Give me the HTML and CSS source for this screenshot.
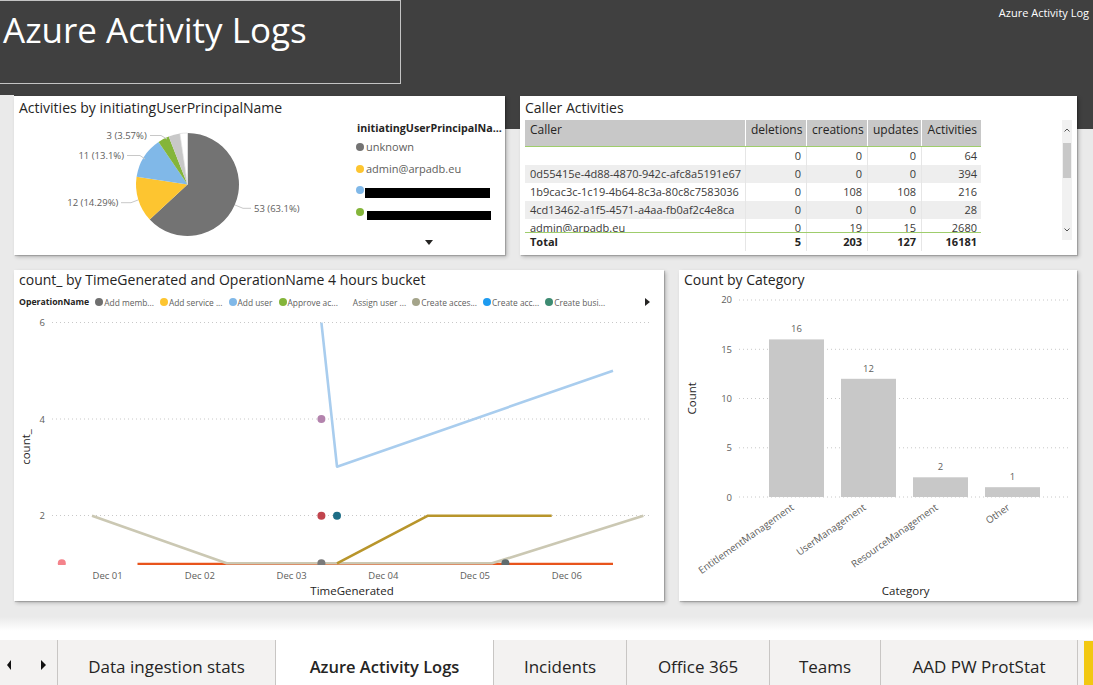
FILE: index.html
```html
<!DOCTYPE html>
<html lang="en">
<head>
<meta charset="utf-8">
<title>Azure Activity Logs</title>
<link rel="stylesheet" href="styles.css">
</head>
<body>
<header class="topbar">
  <div class="title-box"><h1 class="page-title">Azure Activity Logs</h1></div>
  <div class="top-right">Azure Activity Log</div>
</header>

<main class="canvas">
  <div class="row row-top">
    <section class="card card-pie">
      <div class="card-title">Activities by initiatingUserPrincipalName</div>
      <div class="pie-body">
        <svg class="pie-svg" width="342" height="130" viewBox="0 0 342 130">
          <path d="M173.5 64.5 L173.5 13 A51.5 51.5 0 1 1 135.73 99.52Z" fill="#737373"/>
          <path d="M173.5 64.5 L135.73 99.52 A51.5 51.5 0 0 1 122.58 56.8Z" fill="#fdc530"/>
          <path d="M173.5 64.5 L122.58 56.8 A51.5 51.5 0 0 1 144.55 21.9Z" fill="#80b8e8"/>
          <path d="M173.5 64.5 L144.55 21.9 A51.5 51.5 0 0 1 154.71 16.55Z" fill="#84b53a"/>
          <path d="M173.5 64.5 L154.71 16.55 A51.5 51.5 0 0 1 165.89 13.57Z" fill="#c8c8c8"/>
          <path d="M173.5 64.5 L165.89 13.57 A51.5 51.5 0 0 1 173.5 13Z" fill="#ffffff" stroke="#dcdcdc" stroke-width="0.7"/>
          <g class="leader">
            <polyline points="221,85 229,88.3 237,88.3"/>
            <polyline points="107,82.7 117,82.7 124,80"/>
            <polyline points="113,35.5 126,35.5 131,39"/>
            <polyline points="136,15.5 147,15.5 153,19"/>
          </g>
          <g class="pie-lbl">
            <text x="240" y="92.3">53 (63.1%)</text>
            <text x="104.3" y="86" text-anchor="end">12 (14.29%)</text>
            <text x="110" y="39" text-anchor="end">11 (13.1%)</text>
            <text x="132.7" y="19" text-anchor="end">3 (3.57%)</text>
          </g>
        </svg>
        <div class="pie-legend">
          <div class="pl-title">initiatingUserPrincipalNa...</div>
          <div class="pl-item"><span class="dot dot-gray"></span><span>unknown</span></div>
          <div class="pl-item"><span class="dot dot-yellow"></span><span>admin@arpadb.eu</span></div>
          <div class="pl-item"><span class="dot dot-blue"></span><span class="redact r3"></span></div>
          <div class="pl-item"><span class="dot dot-green"></span><span class="redact r4"></span></div>
          <div class="pl-more"><span class="tri-down"></span></div>
        </div>
      </div>
    </section>

    <section class="card card-table">
      <div class="card-title">Caller Activities</div>
      <div class="table-wrap">
        <div class="tbl">
          <div class="tr th">
            <div class="c c1">Caller</div><div class="c n">deletions</div><div class="c n">creations</div><div class="c n">updates</div><div class="c n last">Activities</div>
          </div>
          <div class="tbody">
            <div class="tr"><div class="c c1"></div><div class="c n">0</div><div class="c n">0</div><div class="c n">0</div><div class="c n last">64</div></div>
            <div class="tr alt"><div class="c c1">0d55415e-4d88-4870-942c-afc8a5191e67</div><div class="c n">0</div><div class="c n">0</div><div class="c n">0</div><div class="c n last">394</div></div>
            <div class="tr"><div class="c c1">1b9cac3c-1c19-4b64-8c3a-80c8c7583036</div><div class="c n">0</div><div class="c n">108</div><div class="c n">108</div><div class="c n last">216</div></div>
            <div class="tr alt"><div class="c c1">4cd13462-a1f5-4571-a4aa-fb0af2c4e8ca</div><div class="c n">0</div><div class="c n">0</div><div class="c n">0</div><div class="c n last">28</div></div>
            <div class="tr"><div class="c c1">admin@arpadb.eu</div><div class="c n">0</div><div class="c n">19</div><div class="c n">15</div><div class="c n last">2680</div></div>
          </div>
          <div class="tr total">
            <div class="c c1">Total</div><div class="c n">5</div><div class="c n">203</div><div class="c n">127</div><div class="c n last">16181</div>
          </div>
        </div>
        <div class="vscroll">
          <svg class="chev" width="10" height="8" viewBox="0 0 10 8"><path d="M2.5 5.5 L5 3 L7.5 5.5" fill="none" stroke="#555" stroke-width="1"/></svg>
          <div class="thumb"></div>
          <div class="sc-fill"></div>
          <svg class="chev" width="10" height="8" viewBox="0 0 10 8"><path d="M2.5 2.5 L5 5 L7.5 2.5" fill="none" stroke="#555" stroke-width="1"/></svg>
        </div>
      </div>
    </section>
  </div>

  <div class="row row-bottom">
    <section class="card card-line">
      <div class="card-title tight">count_ by TimeGenerated and OperationName 4 hours bucket</div>
      <div class="line-legend">
        <span class="ll-name">OperationName</span>
        <span class="ll-item"><span class="dot sm" style="background:#6f6f6f"></span>Add memb...</span>
        <span class="ll-item"><span class="dot sm" style="background:#fdc530"></span>Add service ...</span>
        <span class="ll-item"><span class="dot sm" style="background:#80b8e8"></span>Add user</span>
        <span class="ll-item"><span class="dot sm" style="background:#84b53a"></span>Approve ac...</span>
        <span class="ll-item"><span class="dot sm" style="background:#ffffff"></span>Assign user ...</span>
        <span class="ll-item"><span class="dot sm" style="background:#a4a48a"></span>Create acces...</span>
        <span class="ll-item"><span class="dot sm" style="background:#1e9bf0"></span>Create acc...</span>
        <span class="ll-item"><span class="dot sm" style="background:#3d8b72"></span>Create busi...</span>
        <span class="tri-right-sm"></span>
      </div>
      <svg class="line-svg" width="650" height="291" viewBox="0 0 650 291">
        <defs><clipPath id="plotclip"><rect x="30" y="0" width="620" height="255"/></clipPath></defs>
        <g class="grid">
          <line x1="38" y1="12.5" x2="636" y2="12.5"/>
          <line x1="38" y1="109" x2="636" y2="109"/>
          <line x1="38" y1="205.5" x2="636" y2="205.5"/>
        </g>
        <g class="ax">
          <text x="31" y="16" text-anchor="end">6</text>
          <text x="31" y="112.5" text-anchor="end">4</text>
          <text x="31" y="209" text-anchor="end">2</text>
          <text x="93.6" y="268.5" text-anchor="middle">Dec 01</text>
          <text x="185.8" y="268.5" text-anchor="middle">Dec 02</text>
          <text x="277.6" y="268.5" text-anchor="middle">Dec 03</text>
          <text x="369.3" y="268.5" text-anchor="middle">Dec 04</text>
          <text x="461" y="268.5" text-anchor="middle">Dec 05</text>
          <text x="552.8" y="268.5" text-anchor="middle">Dec 06</text>
        </g>
        <text class="axt" x="338" y="285" text-anchor="middle">TimeGenerated</text>
        <text class="axt" transform="translate(16,137) rotate(-90)" text-anchor="middle">count_</text>
        <g clip-path="url(#plotclip)" fill="none" stroke-width="2.6" stroke-linejoin="round">
          <polyline points="123.5,253.8 599,253.8" stroke="#e8541c" stroke-width="2.2"/>
          <polyline points="78,205.7 212.7,253.3 478,253.3 629.4,205.7" stroke="#cbc8b3"/>
          <polyline points="323,253.3 414,205.7 537.7,205.7" stroke="#b8952b"/>
          <polyline points="307.4,12.7 323,156.7 599,60.7" stroke="#a9cdee"/>
          <g stroke="none">
            <circle cx="47.8" cy="253.3" r="4" fill="#f4838b"/>
            <circle cx="307.4" cy="253.3" r="4" fill="#7a7a7a"/>
            <circle cx="491.4" cy="253.3" r="4" fill="#5f6b6d"/>
            <circle cx="307.4" cy="109" r="4" fill="#b383ad"/>
            <circle cx="307.4" cy="205.7" r="4" fill="#c1444d"/>
            <circle cx="323" cy="205.7" r="4" fill="#1d6d86"/>
          </g>
        </g>
      </svg>
    </section>

    <section class="card card-bar">
      <div class="card-title tight">Count by Category</div>
      <svg class="bar-svg" width="398" height="309" viewBox="0 0 398 309">
        <g class="grid">
          <line x1="60" y1="8" x2="390" y2="8"/>
          <line x1="60" y1="57.3" x2="390" y2="57.3"/>
          <line x1="60" y1="106.5" x2="390" y2="106.5"/>
          <line x1="60" y1="155.8" x2="390" y2="155.8"/>
          <line x1="60" y1="205" x2="390" y2="205"/>
        </g>
        <g class="ax">
          <text x="53" y="11" text-anchor="end">20</text>
          <text x="53" y="60.5" text-anchor="end">15</text>
          <text x="53" y="109.7" text-anchor="end">10</text>
          <text x="53" y="159" text-anchor="end">5</text>
          <text x="53" y="208.5" text-anchor="end">0</text>
        </g>
        <g fill="#c8c8c8">
          <rect x="90" y="47.4" width="55" height="157.6"/>
          <rect x="162" y="86.8" width="55" height="118.2"/>
          <rect x="234" y="185.3" width="55" height="19.7"/>
          <rect x="306" y="195.2" width="55" height="9.8"/>
        </g>
        <g class="ax val">
          <text x="117.5" y="39.8" text-anchor="middle">16</text>
          <text x="189.5" y="80.2" text-anchor="middle">12</text>
          <text x="261.5" y="178.2" text-anchor="middle">2</text>
          <text x="333.5" y="188.2" text-anchor="middle">1</text>
        </g>
        <g class="ax rot">
          <text transform="translate(115.5,217) rotate(-35)" text-anchor="end">EntitlementManagement</text>
          <text transform="translate(187.5,217) rotate(-35)" text-anchor="end">UserManagement</text>
          <text transform="translate(259.5,217) rotate(-35)" text-anchor="end">ResourceManagement</text>
          <text transform="translate(331.5,217) rotate(-35)" text-anchor="end">Other</text>
        </g>
        <text class="axt" x="226.7" y="303" text-anchor="middle">Category</text>
        <text class="axt" transform="translate(16.5,106.3) rotate(-90)" text-anchor="middle">Count</text>
      </svg>
    </section>
  </div>
</main>

<nav class="tabs">
  <div class="tab-arrows"><span class="tri-left"></span><span class="tri-right"></span></div>
  <div class="tab w1">Data ingestion stats</div>
  <div class="tab w2 active">Azure Activity Logs</div>
  <div class="tab w3">Incidents</div>
  <div class="tab w4">Office 365</div>
  <div class="tab w5">Teams</div>
  <div class="tab w6">AAD PW ProtStat</div>
  <div class="tab-gap"></div>
  <div class="tab-accent"></div>
</nav>
</body>
</html>
```

FILE: styles.css
```css
* { box-sizing: border-box; margin: 0; padding: 0; }
html, body { width: 1093px; height: 685px; overflow: hidden; }
body {
  font-family: "Open Sans", "Noto Sans", sans-serif;
  color: #252423;
  background: #ffffff;
}

/* ---------- header ---------- */
.topbar {
  height: 95px;
  background: #404040;
  display: flex;
  justify-content: space-between;
  align-items: flex-start;
}
.title-box {
  width: 401px;
  height: 84px;
  border: 1px solid #c4c4c4;
  border-left: none;
}
.page-title {
  font-weight: 400;
  font-size: 35px;
  line-height: 48px;
  padding: 5px 0 0 3px;
  color: #ffffff;
  white-space: nowrap;
}
.top-right {
  font-size: 11px;
  line-height: 14px;
  color: #ffffff;
  margin: 6px 4px 0 0;
}

/* ---------- canvas ---------- */
.canvas {
  height: 545px;
  padding: 1px 16px 0 14px;
  background:
    linear-gradient(#404040, #404040) 14px 0 / 1079px 34px no-repeat,
    linear-gradient(#eaeaea 522px, #ffffff 536px);
}
.row { display: flex; gap: 15px; }
.row-top { height: 159px; }
.row-bottom { height: 331px; margin-top: 15px; }

.card {
  background: #ffffff;
  box-shadow: 1px 1px 1px rgba(0,0,0,0.18), 2px 2px 4px rgba(0,0,0,0.22);
  overflow: hidden;
}
.card-pie { width: 491px; }
.card-table { width: 557px; }
.card-line { width: 650px; }
.card-bar { width: 398px; }

.card-title {
  height: 24px;
  padding: 2px 5px 0;
  font-size: 14px;
  line-height: 20px;
  color: #252423;
  white-space: nowrap;
}
.card-title.tight { padding-top: 0; }
.card-bar .card-title { height: 22px; }

/* ---------- pie ---------- */
.pie-body { display: flex; }
.pie-svg { display: block; flex: none; }
.leader polyline { fill: none; stroke: #c8c8c8; stroke-width: 1; }
.pie-lbl text { font-size: 9.5px; fill: #605e5c; }
.pie-legend { width: 149px; font-size: 11px; color: #605e5c; }
.pl-title {
  font-weight: 700;
  font-size: 10.7px;
  color: #252423;
  line-height: 16px;
  padding-left: 1px;
  white-space: nowrap;
}
.pl-item {
  height: 21.7px;
  display: flex;
  align-items: center;
  gap: 2px;
  white-space: nowrap;
}
.dot {
  display: inline-block;
  width: 8px;
  height: 8px;
  border-radius: 50%;
  flex: none;
}
.dot-gray { background: #737373; }
.dot-yellow { background: #fdc530; }
.dot-blue { background: #80b8e8; }
.dot-green { background: #84b53a; }
.redact { display: inline-block; background: #000; height: 10px; }
.r3 { width: 125px; margin: 5px 0 0 -1px; }
.r4 { width: 124px; height: 9px; margin: 7px 0 0 1px; }
.pl-more { padding: 17px 0 0 69px; }
.tri-down {
  display: block;
  width: 0;
  height: 0;
  border-left: 4.5px solid transparent;
  border-right: 4.5px solid transparent;
  border-top: 5px solid #252423;
}

/* ---------- table ---------- */
.table-wrap { display: flex; padding-left: 5px; }
.tbl { width: 456px; font-size: 11px; color: #3b3a39; }
.tr {
  display: grid;
  grid-template-columns: 221px 61px 61px 54px 59px;
  height: 18px;
  line-height: 18px;
}
.tr.alt { background: #eeeeee; }
.c { padding: 0 5px; white-space: nowrap; overflow: hidden; border-right: 1px solid #e6e6e6; }
.c.last { border-right: none; }
.c.n { text-align: right; }
.c.n.last { padding-right: 4px; }
.th {
  height: 27px;
  background: #c8c8c8;
  font-size: 12px;
  color: #252423;
  border-bottom: 1px solid #9fcd6c;
}
.th .c { border-right-color: #ffffff; padding-top: 1px; }
.tbody { height: 86px; overflow: hidden; border-bottom: 1px solid #9fcd6c; }
.total { font-weight: 700; color: #252423; }
.vscroll {
  margin-left: 81px;
  width: 10px;
  height: 120px;
  background: #f1f1f1;
  display: flex;
  flex-direction: column;
  align-items: center;
}
.chev { display: block; margin: 6px 0; flex: none; }
.thumb { width: 8px; height: 35px; background: #c8c8c8; flex: none; margin-top: 3px; }
.sc-fill { flex: 1; }

/* ---------- line chart ---------- */
.line-legend {
  height: 16px;
  display: flex;
  align-items: center;
  padding: 0 14px 0 5px;
  font-size: 8.4px;
  color: #605e5c;
  white-space: nowrap;
}
.ll-name { font-weight: 700; font-size: 8.7px; color: #252423; margin-right: 6px; }
.ll-item { display: flex; align-items: center; gap: 1px; margin-right: 6px; }
.dot.sm { width: 8px; height: 8px; }
.tri-right-sm {
  margin-left: auto;
  width: 0;
  height: 0;
  border-top: 4px solid transparent;
  border-bottom: 4px solid transparent;
  border-left: 5px solid #252423;
}
.line-svg, .bar-svg { display: block; }
.grid line { stroke: #c8c8c8; stroke-width: 1; stroke-dasharray: 1 3; }
.ax text, .ax { font-size: 9.5px; fill: #605e5c; font-family: "Open Sans", "Noto Sans", sans-serif; }
.rot text { font-size: 9.8px; }
.axt { font-size: 11.5px; fill: #252423; font-family: "Open Sans", "Noto Sans", sans-serif; }

/* ---------- tabs ---------- */
.tabs {
  height: 45px;
  display: flex;
  background: #f3f2f1;
}
.tab-arrows {
  width: 58px;
  border-right: 1px solid #c8c6c4;
  display: flex;
  align-items: center;
  padding: 4px 0 0 7px;
  gap: 30px;
}
.tri-left {
  width: 0; height: 0;
  border-top: 5px solid transparent;
  border-bottom: 5px solid transparent;
  border-right: 4px solid #111;
}
.tri-right {
  width: 0; height: 0;
  border-top: 5px solid transparent;
  border-bottom: 5px solid transparent;
  border-left: 5px solid #111;
}
.tab {
  border-right: 1px solid #c8c6c4;
  display: flex;
  align-items: center;
  justify-content: center;
  font-size: 17px;
  color: #252423;
  white-space: nowrap;
  padding-top: 7px;
}
.tab.active { background: #ffffff; font-weight: 600; font-size: 16.5px; }
.w1 { width: 218px; }
.w2 { width: 218px; }
.w3 { width: 133px; }
.w4 { width: 143px; }
.w5 { width: 111px; }
.w6 { width: 197px; }
.tab-gap { width: 6px; }
.tab-accent { width: 9px; margin-top: 1px; background: #f2c811; }
```
